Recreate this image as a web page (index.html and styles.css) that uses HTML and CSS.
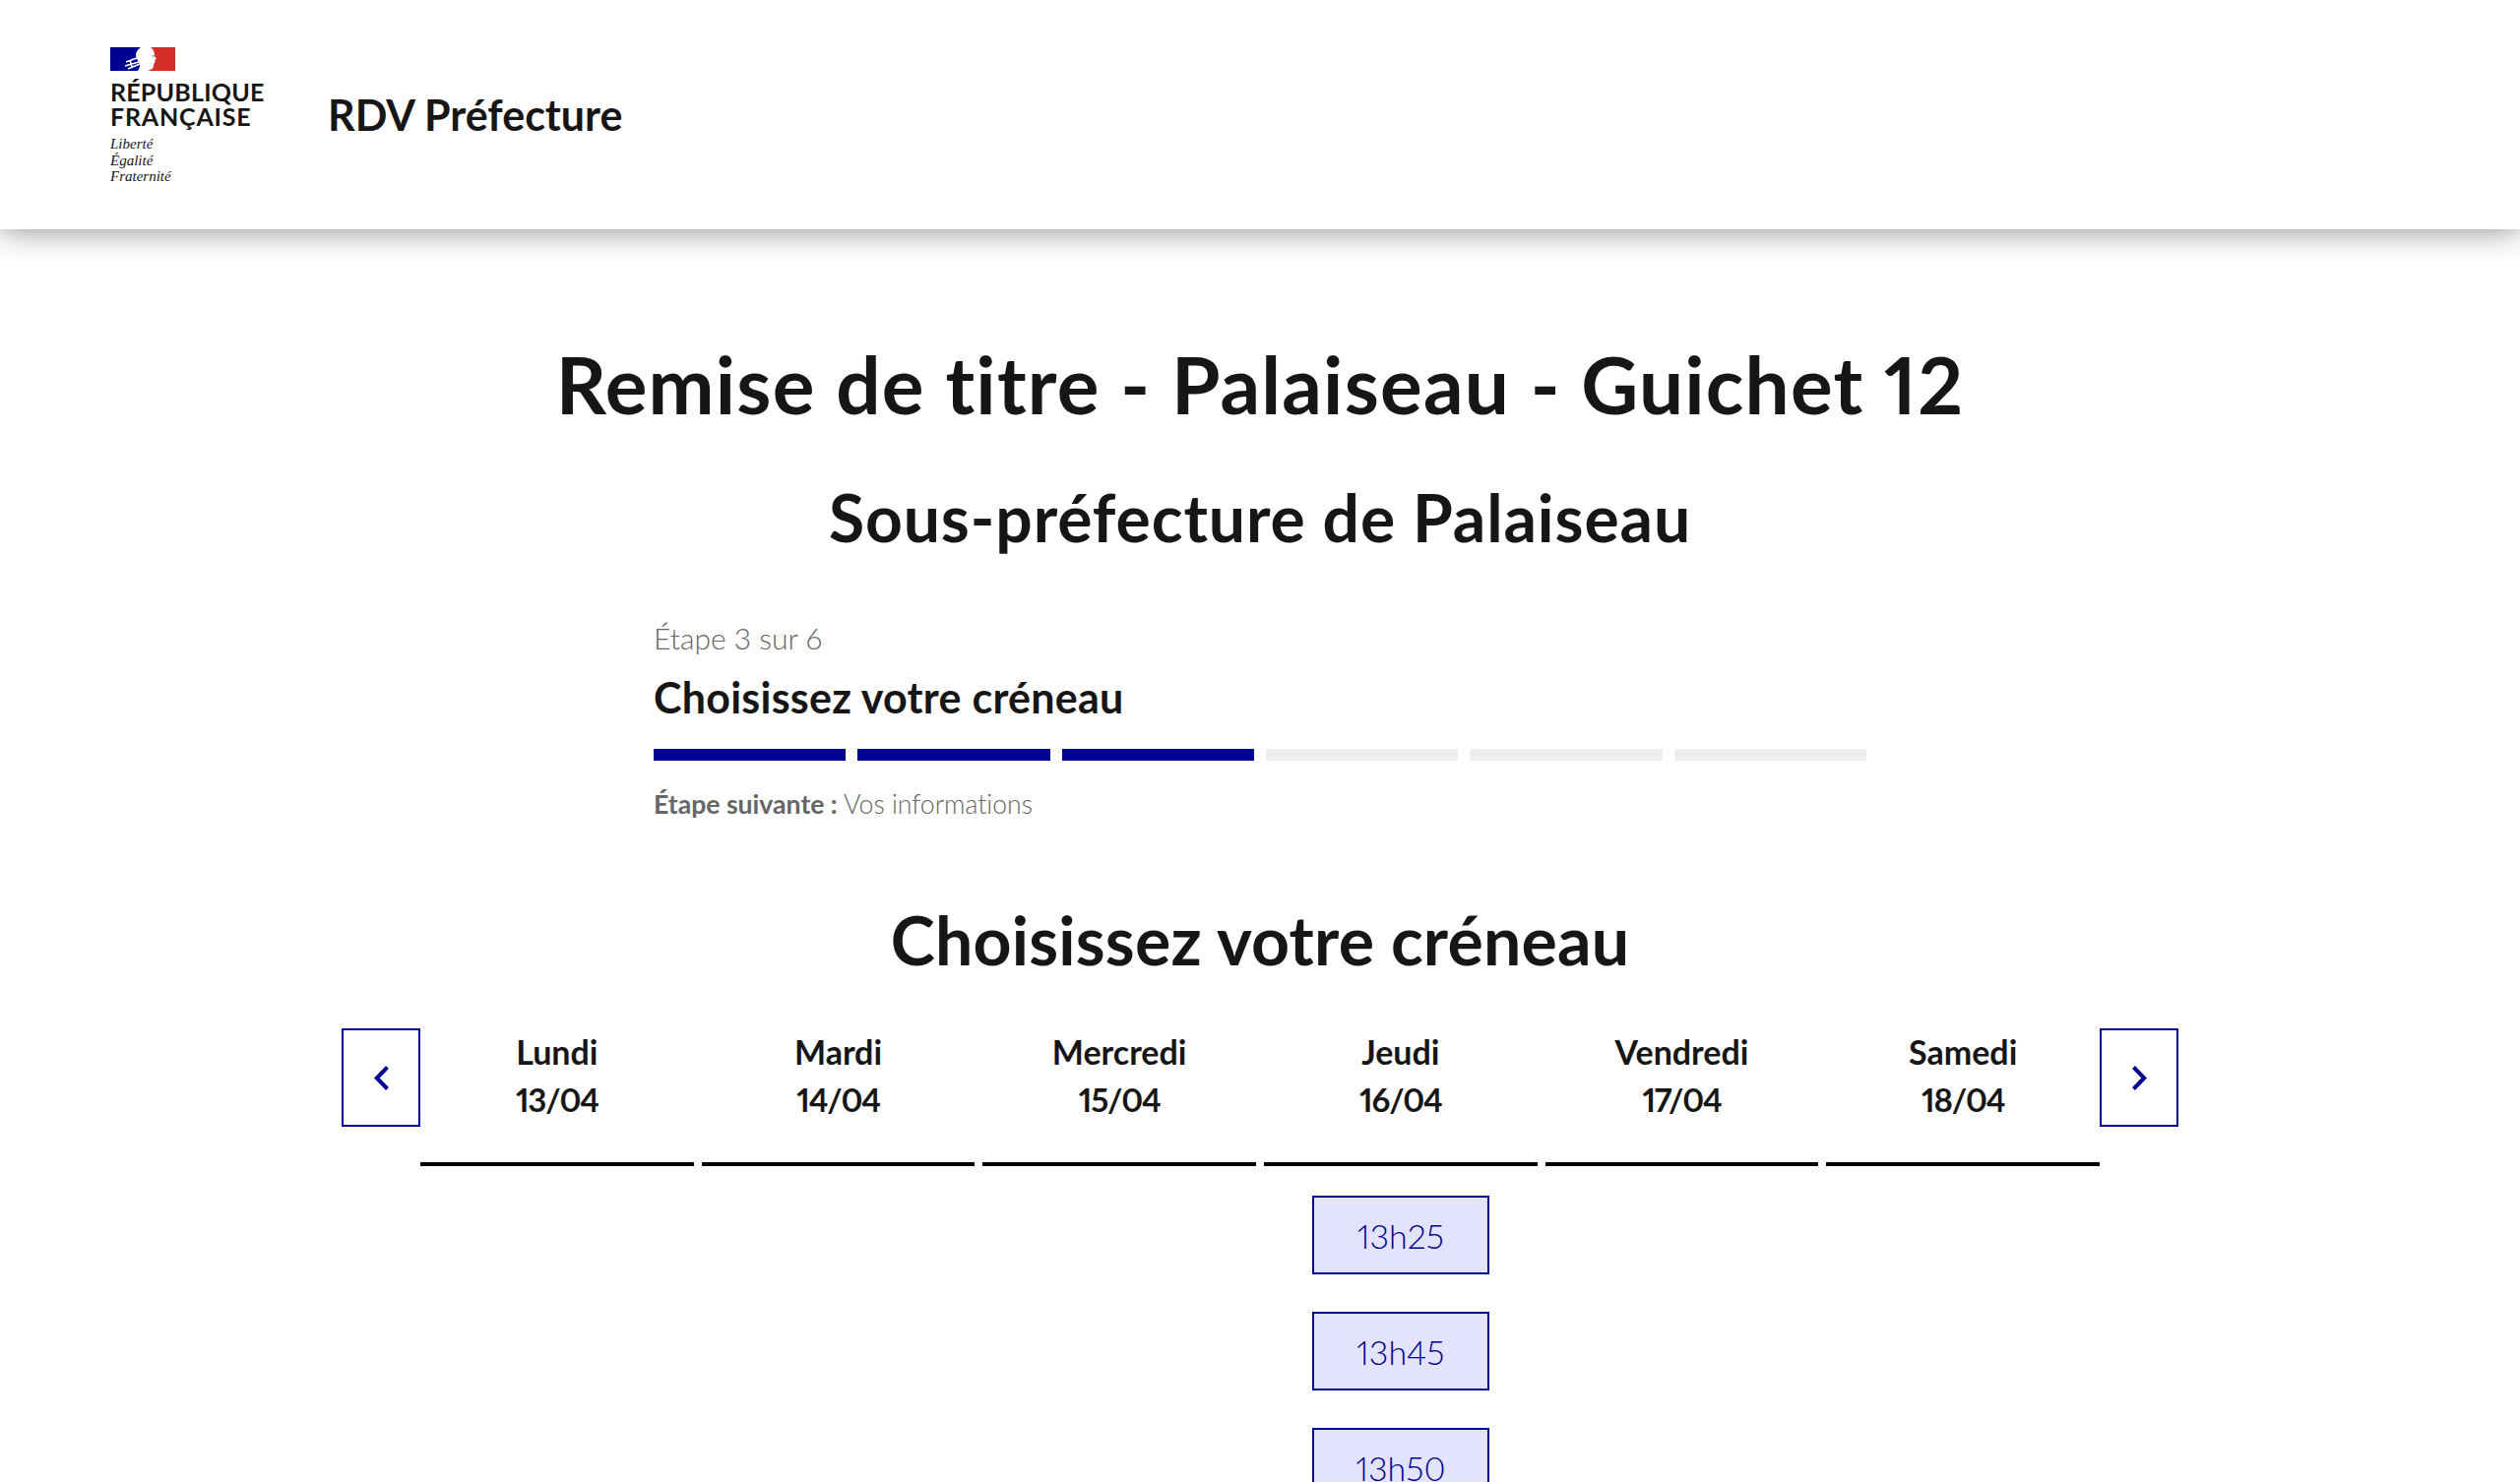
FILE: index.html
```html
<!DOCTYPE html>
<html lang="fr">
<head>
  <meta charset="UTF-8" />
  <meta name="viewport" content="width=device-width, initial-scale=1" />
  <title>RDV Préfecture</title>
  <link rel="stylesheet" href="styles.css">
</head>
<body>
  <header class="site-header">
    <div class="logo">
      <svg class="logo-flag" viewBox="0 0 66 24" width="66" height="24" aria-hidden="true">
        <rect width="66" height="24" fill="#fff"/>
        <path d="M0 0H31C28 2 26 5 26 8C26 10 27 12 29 15C31 18 30 21 28 24H0Z" fill="#000091"/>
        <path d="M41 0H66V24H38C42 23 44 21 44 19C44 17 45 15 46 15L45 13L47 12L45 9C45 5 44 2 41 0Z" fill="#d32f27"/>
        <path d="M16 15L27 11M15 19L29 15M18 22L30 17M20 13L22 20" fill="none" stroke="#fff" stroke-width="1.6"/>
        <path d="M42 8L45 8V10L43 10Z" fill="#bbb"/>
      </svg>
      <p class="logo-name"><span>RÉPUBLIQUE</span><span class="logo-name-wide">FRANÇAISE</span></p>
      <p class="logo-motto">Liberté<br>Égalité<br>Fraternité</p>
    </div>
    <span class="site-name">RDV Préfecture</span>
  </header>

  <main>
    <h1>Remise de titre - Palaiseau - Guichet 12</h1>
    <h2>Sous-préfecture de Palaiseau</h2>

    <section class="stepper">
      <p class="step-count">Étape 3 sur 6</p>
      <p class="step-title">Choisissez votre créneau</p>
      <div class="step-bars">
        <span class="done"></span>
        <span class="done"></span>
        <span class="done"></span>
        <span></span>
        <span></span>
        <span></span>
      </div>
      <p class="step-next"><b>Étape suivante :</b> Vos informations</p>
    </section>

    <h3>Choisissez votre créneau</h3>

    <section class="calendar">
      <button class="nav-btn" aria-label="Précédent">
        <svg viewBox="0 0 15 25" width="15" height="25"><path d="M13.5 1.5L2.8 12.5L13.5 23.5" fill="none" stroke="#000091" stroke-width="4"/></svg>
      </button>
      <div class="days">
        <div class="day"><div class="day-head">Lundi<span class="day-date">13/04</span></div></div>
        <div class="day"><div class="day-head">Mardi<span class="day-date">14/04</span></div></div>
        <div class="day"><div class="day-head">Mercredi<span class="day-date">15/04</span></div></div>
        <div class="day">
          <div class="day-head">Jeudi<span class="day-date">16/04</span></div>
          <a class="slot" href="#">13h25</a>
          <a class="slot" href="#">13h45</a>
          <a class="slot" href="#">13h50</a>
        </div>
        <div class="day"><div class="day-head">Vendredi<span class="day-date">17/04</span></div></div>
        <div class="day"><div class="day-head">Samedi<span class="day-date">18/04</span></div></div>
      </div>
      <button class="nav-btn" aria-label="Suivant">
        <svg viewBox="0 0 15 25" width="15" height="25"><path d="M1.5 1.5L12.2 12.5L1.5 23.5" fill="none" stroke="#000091" stroke-width="4"/></svg>
      </button>
    </section>
  </main>
</body>
</html>
```

FILE: styles.css
```css
* { box-sizing: border-box; }

html, body {
  height: 100vh;
  overflow: hidden;
}

body {
  margin: 0;
  font-family: 'Lato', sans-serif;
  font-variant-ligatures: none;
  font-variant-numeric: proportional-nums;
  color: #161616;
  background: #fff;
}

p { margin: 0; }

.site-header {
  height: 233px;
  padding: 48px 112px 0;
  display: flex;
  align-items: flex-start;
  background: #fff;
  box-shadow: 0 0 32px rgba(0, 0, 0, 0.48);
}

.logo { width: 221px; }
.logo-flag { display: block; }

.logo-name {
  margin-top: 9px;
  font-size: 25px;
  line-height: 25px;
  font-weight: 700;
  letter-spacing: 0.2px;
  color: #161616;
}

.logo-name span { display: block; }
.logo-name .logo-name-wide { letter-spacing: 0.8px; }

.logo-motto {
  margin-top: 7px;
  font-family: 'Liberation Serif', serif;
  font-style: italic;
  font-size: 15px;
  line-height: 16.5px;
}

.site-name {
  margin-top: 43px;
  font-size: 43px;
  line-height: 52px;
  font-weight: 700;
}

main {
  display: flex;
  flex-direction: column;
  align-items: center;
}

h1 {
  margin: 109px 0 0;
  font-size: 80px;
  line-height: 96px;
  font-weight: 700;
  letter-spacing: 1.2px;
}

h2 {
  margin: 48px 0 0;
  font-size: 66px;
  line-height: 80px;
  font-weight: 700;
  letter-spacing: 0.9px;
}

.stepper {
  width: 1232px;
  margin-top: 60px;
}

.step-count {
  font-size: 30px;
  line-height: 44px;
  font-weight: 300;
  color: #666;
}

.step-title {
  margin-top: 13px;
  font-size: 43px;
  line-height: 52px;
  font-weight: 700;
  letter-spacing: 0.25px;
}

.step-bars {
  display: flex;
  gap: 12px;
  margin-top: 26px;
}

.step-bars span {
  flex: 1;
  height: 12px;
  background: #eee;
}

.step-bars .done { background: #000091; }

.step-next {
  margin-top: 24px;
  font-size: 26.6px;
  line-height: 40px;
  font-weight: 300;
  color: #666;
}

.step-next b { font-weight: 700; }

h3 {
  margin: 78px 0 0;
  font-size: 68px;
  line-height: 80px;
  font-weight: 700;
  letter-spacing: 0.2px;
}

.calendar {
  width: 1866px;
  display: flex;
  align-items: flex-start;
  margin-top: 50px;
}

.nav-btn {
  flex: none;
  width: 80px;
  height: 100px;
  padding: 0;
  display: flex;
  align-items: center;
  justify-content: center;
  background: #fff;
  border: 2px solid #000091;
}

.days {
  flex: 1;
  display: grid;
  grid-template-columns: repeat(6, 1fr);
  gap: 8px;
}

.day {
  display: flex;
  flex-direction: column;
  align-items: center;
}

.day-head {
  width: 100%;
  height: 140px;
  text-align: center;
  font-size: 34px;
  line-height: 48px;
  font-weight: 700;
  border-bottom: 4px solid #000;
}

.day-date {
  display: block;
  font-size: 33px;
  letter-spacing: -1.2px;
}

.slot {
  width: 180px;
  height: 80px;
  flex: none;
  display: flex;
  align-items: center;
  justify-content: center;
  font-size: 34px;
  font-weight: 300;
  color: #000091;
  text-decoration: none;
  background: #e3e3fd;
  border: 2px solid #000091;
}

.slot:first-of-type { margin-top: 30px; }
.slot + .slot { margin-top: 38px; }
```
